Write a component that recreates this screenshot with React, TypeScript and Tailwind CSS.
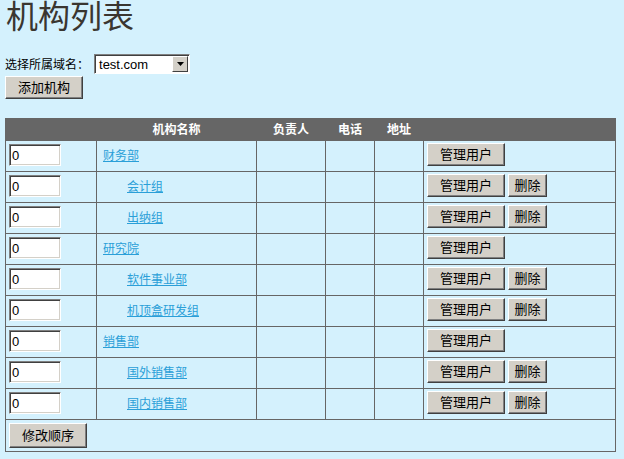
import React from "react";

const FONT = { fontFamily: '"Liberation Sans", "Noto Sans CJK SC", sans-serif' };

type Org = { name: string; level: number; canDelete: boolean };

const orgs: Org[] = [
  { name: "财务部", level: 0, canDelete: false },
  { name: "会计组", level: 1, canDelete: true },
  { name: "出纳组", level: 1, canDelete: true },
  { name: "研究院", level: 0, canDelete: false },
  { name: "软件事业部", level: 1, canDelete: true },
  { name: "机顶盒研发组", level: 1, canDelete: true },
  { name: "销售部", level: 0, canDelete: false },
  { name: "国外销售部", level: 1, canDelete: true },
  { name: "国内销售部", level: 1, canDelete: true },
];

const WinButton = ({ children, className = "" }: { children: React.ReactNode; className?: string }) => (
  <button
    className={`h-[23px] bg-[#d4d0c8] text-[13px] leading-none text-black border border-t-white border-l-white border-r-[#404040] border-b-[#404040] shadow-[inset_-1px_-1px_#808080] ${className}`}
  >
    {children}
  </button>
);

const OrderInput = () => (
  <input
    type="text"
    defaultValue="0"
    className="block w-[52px] h-[22px] bg-white pl-[2px] text-[13px] text-black outline-none border border-t-[#808080] border-l-[#808080] border-r-white border-b-white shadow-[inset_1px_1px_#404040,inset_-1px_-1px_#d4d0c8]"
  />
);

const App = () => {
  return (
    <div className="w-[624px] h-[459px] overflow-hidden bg-[#d4f1fd] text-black" style={FONT}>
      <h1 className="pl-[6px] pt-[1px] text-[32px] leading-[32px] text-[#3a3630] font-normal">机构列表</h1>

      <div className="mt-[21px] pl-[5px] flex items-center text-[12px] h-[19px]">
        <span className="pt-[3px]">选择所属域名：</span>
        <div className="ml-[5px] w-[96px] h-[20px] flex bg-white border border-t-[#808080] border-l-[#808080] border-r-white border-b-white shadow-[inset_1px_1px_#404040]">
          <span className="flex-1 pl-[4px] text-[13px] leading-[17px] pt-[1px] text-black">test.com</span>
          <span className="w-[16px] h-[16px] mt-[1px] mr-[1px] flex items-center justify-center bg-[#d4d0c8] border border-t-white border-l-white border-r-[#404040] border-b-[#404040]">
            <svg width="7" height="4" viewBox="0 0 7 4">
              <path d="M0 0h7L3.5 4z" fill="#000" />
            </svg>
          </span>
        </div>
      </div>

      <div className="pl-[5px] mt-[2px]">
        <WinButton className="w-[78px]">添加机构</WinButton>
      </div>

      <table className="ml-[5px] mt-[19px] w-[611px] table-fixed border-collapse border border-[#666666] text-[12px]">
        <colgroup>
          <col className="w-[91px]" />
          <col className="w-[160px]" />
          <col className="w-[69px]" />
          <col className="w-[49px]" />
          <col className="w-[49px]" />
          <col />
        </colgroup>
        <thead>
          <tr className="h-[22px] bg-[#666666] text-white font-bold">
            <th className="border border-[#666666]"></th>
            <th className="border border-[#666666]">机构名称</th>
            <th className="border border-[#666666]">负责人</th>
            <th className="border border-[#666666]">电话</th>
            <th className="border border-[#666666]">地址</th>
            <th className="border border-[#666666]"></th>
          </tr>
        </thead>
        <tbody>
          {orgs.map((o) => (
            <tr key={o.name} className="h-[31px]">
              <td className="border border-[#666666] pl-[3px] align-top pt-[3px]">
                <OrderInput />
              </td>
              <td className="border border-[#666666] pl-[6px]">
                <a
                  href="#"
                  className={`text-[#2a9fd8] underline ${o.level ? "ml-[24px]" : ""}`}
                >
                  {o.name}
                </a>
              </td>
              <td className="border border-[#666666]"></td>
              <td className="border border-[#666666]"></td>
              <td className="border border-[#666666]"></td>
              <td className="border border-[#666666] pl-[3px] align-top pt-[2px]">
                <div className="flex gap-[3px]">
                  <WinButton className="w-[78px]">管理用户</WinButton>
                  {o.canDelete && <WinButton className="w-[39px]">删除</WinButton>}
                </div>
              </td>
            </tr>
          ))}
          <tr className="h-[32px]">
            <td colSpan={6} className="border border-[#666666] pl-[3px] align-top pt-[3px]">
              <WinButton className="w-[78px] h-[25px]">修改顺序</WinButton>
            </td>
          </tr>
        </tbody>
      </table>
    </div>
  );
};

export default App;
